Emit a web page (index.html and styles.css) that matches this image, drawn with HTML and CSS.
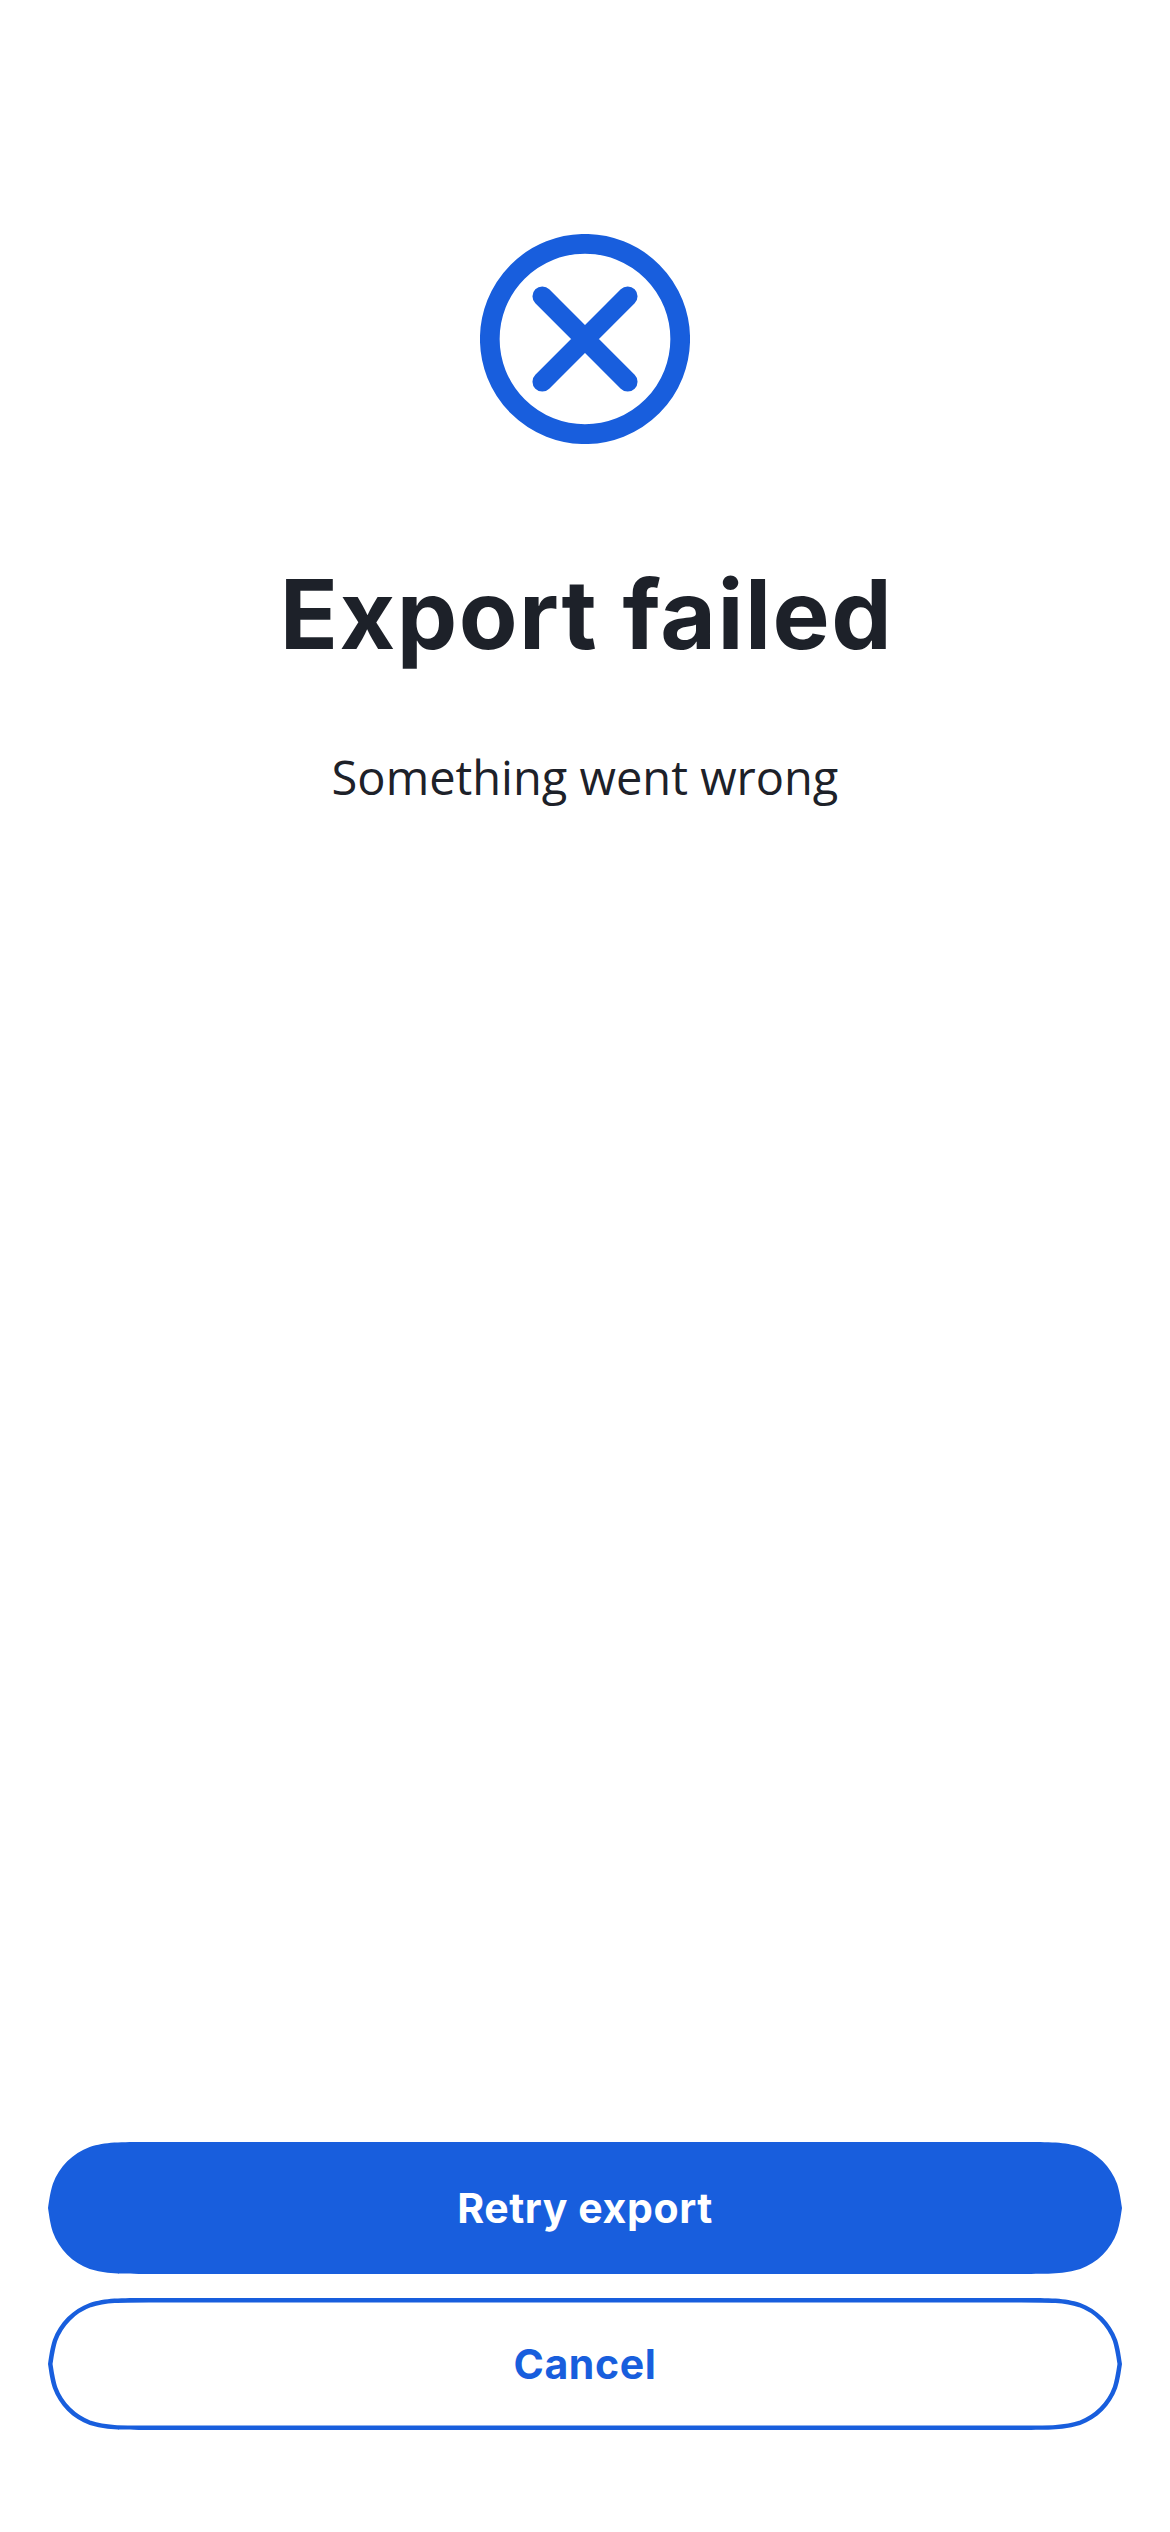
FILE: index.html
```html
<!DOCTYPE html>
<html lang="en">
<head>
<meta charset="utf-8">
<title>Export failed</title>
<link rel="stylesheet" href="styles.css">
</head>
<body>
<main class="screen">
  <section class="message">
    <svg class="status-icon" viewBox="-105 -105 210 210" aria-hidden="true">
      <circle r="95.2"/>
      <path d="M-42.7-42.7 42.7 42.7M42.7-42.7-42.7 42.7"/>
    </svg>
    <h1 class="title">Export failed</h1>
    <p class="description">Something went wrong</p>
  </section>
  <div class="actions">
    <button class="button button-primary" type="button">
      <svg class="shape" viewBox="0 0 1074 132" aria-hidden="true">
        <defs>
          <path id="capsule" d="M101 0H973C1002 0 1016.700 0 1032.300 4.900 1049.400 11.200 1062.800 24.600 1069.100 41.700 1071.700 50 1072.500 56 1074 66 1072.500 76 1071.700 82 1069.100 90.300 1062.800 107.400 1049.400 120.800 1032.300 127.100 1016.700 132 1002 132 973 132H101C72 132 57.300 132 41.700 127.100 24.600 120.800 11.200 107.400 4.900 90.300 2.300 82 1.500 76 0 66 1.500 56 2.300 50 4.900 41.700 11.200 24.600 24.600 11.200 41.700 4.900 57.300 0 72 0 101 0Z"/>
          <clipPath id="capsule-clip"><use href="#capsule"/></clipPath>
        </defs>
        <use href="#capsule"/>
      </svg>
      <span class="label">Retry export</span>
    </button>
    <button class="button button-secondary" type="button">
      <svg class="shape" viewBox="0 0 1074 132" aria-hidden="true">
        <use href="#capsule" clip-path="url(#capsule-clip)"/>
      </svg>
      <span class="label">Cancel</span>
    </button>
  </div>
</main>
</body>
</html>
```
FILE: styles.css
```css
* { box-sizing: border-box; }

body {
  margin: 0;
  background: #fff;
  color: #1d2129;
  font-family: Inter, "Liberation Sans", sans-serif;
}

.screen {
  display: flex;
  flex-direction: column;
  justify-content: space-between;
  height: 2532px;
  padding: 234px 48px 102px;
}

.message {
  display: flex;
  flex-direction: column;
  align-items: center;
}

.status-icon {
  width: 210px;
  height: 210px;
  fill: none;
  stroke: #185edd;
  stroke-width: 19.7px;
  stroke-linecap: round;
}

.title {
  margin: 110px 0 0;
  padding-left: 3px;
  font-size: 96px;
  font-weight: 700;
  line-height: 120px;
  letter-spacing: 1.5px;
  white-space: nowrap;
}

.description {
  margin: 67px 0 0;
  font-family: "Open Sans", "Noto Sans", sans-serif;
  font-size: 47px;
  line-height: 72px;
  white-space: nowrap;
}

.actions {
  display: flex;
  flex-direction: column;
  gap: 24px;
}

.button {
  position: relative;
  display: flex;
  align-items: center;
  justify-content: center;
  height: 132px;
  padding: 0;
  border: 0;
  background: none;
  font-family: inherit;
  font-size: 41px;
  font-weight: 650;
  line-height: 60px;
  letter-spacing: 0.6px;
}

.button-primary { color: #fff; fill: #185edd; }
.button-secondary { color: #185edd; fill: none; stroke: #185edd; stroke-width: 9px; }

.shape {
  position: absolute;
  inset: 0;
  width: 100%;
  height: 100%;
}

.label { position: relative; }
```
